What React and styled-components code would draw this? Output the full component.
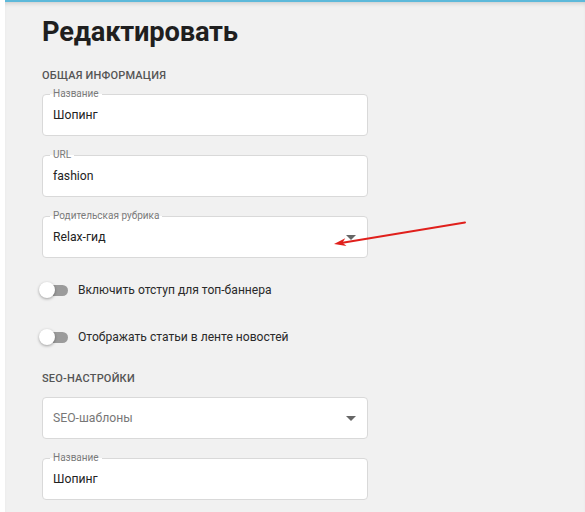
import React from "react";
import styled, { createGlobalStyle } from "styled-components";

const GlobalStyle = createGlobalStyle`
  html, body {
    margin: 0;
    padding: 0;
    background: #ffffff;
    font-family: Roboto, "Liberation Sans", sans-serif;
  }
`;

const Page = styled.div`
  position: relative;
  margin-left: 5px;
  height: 512px;
  overflow: hidden;
  background: #f1f1f1;
  border-top: 2px solid #5db9da;
  box-shadow: inset 0 4px 5px -3px rgba(0, 0, 0, 0.18);
  box-sizing: border-box;
`;

const Content = styled.div`
  display: flex;
  flex-direction: column;
  width: 326px;
  padding: 13px 0 0 37px;
`;

const Title = styled.h1`
  margin: 0;
  font-size: 27.3px;
  line-height: 34px;
  font-weight: 700;
  color: #1f1f1f;
  letter-spacing: -0.2px;
`;

const Section = styled.div`
  margin-top: ${(p) => p.$top}px;
  font-size: 11px;
  line-height: 14px;
  font-weight: 500;
  color: #555555;
  text-transform: uppercase;
  letter-spacing: 0.2px;
`;

const Field = styled.div`
  position: relative;
  margin-top: ${(p) => p.$top}px;
  height: 42px;
  display: flex;
  align-items: center;
  padding: 0 10px;
  background: #ffffff;
  border: 1px solid #d9d9d9;
  border-radius: 4px;
  box-sizing: border-box;
`;

const Label = styled.span`
  position: absolute;
  top: -7px;
  left: 7px;
  padding: 0 3px;
  font-size: 10px;
  line-height: 12px;
  color: #7a7a7a;
  background: linear-gradient(#f1f1f1 50%, #ffffff 50%);
`;

const Value = styled.span`
  flex: 1;
  font-size: 12.2px;
  color: ${(p) => (p.$placeholder ? "#777777" : "#222222")};
`;

const Caret = styled.span`
  width: 0;
  height: 0;
  margin-right: 1px;
  border-left: 5px solid transparent;
  border-right: 5px solid transparent;
  border-top: 5px solid #666666;
`;

const ToggleRow = styled.div`
  display: flex;
  align-items: center;
  gap: 9px;
  margin-top: ${(p) => p.$top}px;
  font-size: 12.1px;
  color: #2a2a2a;
`;

const Switch = styled.span`
  position: relative;
  width: 30px;
  height: 16px;
  flex: none;
  margin-left: -3px;

  &::before {
    content: "";
    position: absolute;
    left: 4px;
    top: 2.5px;
    width: 25px;
    height: 11px;
    border-radius: 6px;
    background: #9b9b9b;
  }

  &::after {
    content: "";
    position: absolute;
    left: 0;
    top: 0;
    width: 16px;
    height: 16px;
    border-radius: 50%;
    background: #ffffff;
    box-shadow: 0 1px 3px rgba(0, 0, 0, 0.35);
  }
`;

const Pointer = styled.svg`
  position: absolute;
  left: 320px;
  top: 210px;
`;

const TextField = ({ label, value, top, select, placeholder }) => (
  <Field $top={top}>
    {label && <Label>{label}</Label>}
    <Value $placeholder={placeholder}>{value}</Value>
    {select && <Caret />}
  </Field>
);

const Toggle = ({ text, top }) => (
  <ToggleRow $top={top}>
    <Switch />
    <span>{text}</span>
  </ToggleRow>
);

export default function App() {
  return (
    <>
      <GlobalStyle />
      <Page>
        <Content>
          <Title>Редактировать</Title>
          <Section $top={20}>Общая информация</Section>
          <TextField top={11} label="Название" value="Шопинг" />
          <TextField top={19} label="URL" value="fashion" />
          <TextField top={19} label="Родительская рубрика" value="Relax-гид" select />
          <Toggle top={24} text="Включить отступ для топ-баннера" />
          <Toggle top={31} text="Отображать статьи в ленте новостей" />
          <Section $top={27}>SEO-настройки</Section>
          <TextField top={11} value="SEO-шаблоны" select placeholder />
          <TextField top={19} label="Название" value="Шопинг" />
        </Content>
        <Pointer width="150" height="40" viewBox="0 0 150 40">
          <line x1="140" y1="10.5" x2="16" y2="31" stroke="#e0201c" strokeWidth="2" strokeLinecap="round" />
          <path d="M9 32 L20.2 26.2 L17.5 30.7 L21.5 34 Z" fill="#e0201c" />
        </Pointer>
      </Page>
    </>
  );
}
